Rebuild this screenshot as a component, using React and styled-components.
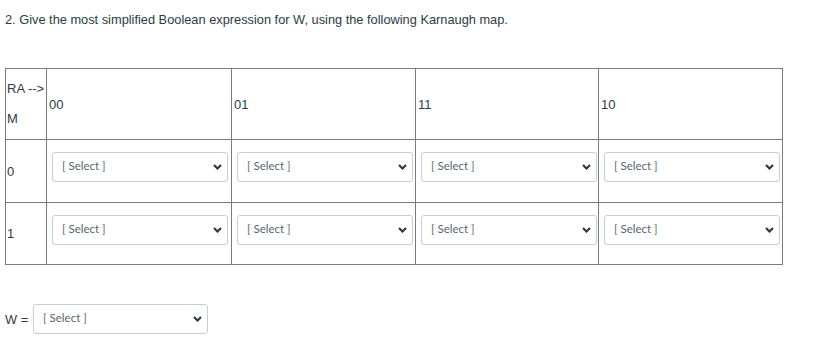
import React from "react";
import styled, { createGlobalStyle } from "styled-components";

const Global = createGlobalStyle`
  html, body { margin: 0; padding: 0; background: #fff; }
  body { font-family: "Liberation Sans", Arial, sans-serif; color: #2d3b45; }
`;

const Page = styled.div`
  padding: 12px 0 0 5px;
`;

const Title = styled.div`
  font-size: 12.8px;
  line-height: 16px;
  color: #2d3b45;
  margin-bottom: 40px;
`;

const Table = styled.table`
  border-collapse: collapse;
  table-layout: fixed;
  width: 777px;
  font-size: 13px;
`;

const Cell = styled.td`
  border: 1px solid #7a7a7a;
  padding: ${(p) => (p.$select ? "0 0 8px 5px" : "0 0 0 2px")};
  vertical-align: middle;
  text-align: left;
  height: ${(p) => p.$h}px;
  box-sizing: border-box;
`;

const LabelCell = styled(Cell)`
  padding-left: 1px;
  white-space: nowrap;
`;

const HeadLine = styled.div`
  line-height: 30px;
`;

const SelectWrap = styled.div`
  position: relative;
  width: ${(p) => p.$w || 176}px;
  height: 30px;
`;

const Select = styled.select`
  appearance: none;
  -webkit-appearance: none;
  width: 100%;
  height: 30px;
  box-sizing: border-box;
  border: 1px solid #c7cdd1;
  border-radius: 3px;
  background: #fff;
  padding: 0 24px 3px 9px;
  font-family: Lato, "Liberation Sans", sans-serif;
  font-size: 11.5px;
  color: #5a6670;
  outline: none;
`;

const Chevron = styled.svg`
  position: absolute;
  right: 6px;
  top: 12px;
  width: 9px;
  height: 6px;
  pointer-events: none;
`;

const Bottom = styled.div`
  display: flex;
  align-items: center;
  gap: 5px;
  margin-top: 39px;
  font-size: 12.8px;
`;

function Dropdown({ w }) {
  return (
    <SelectWrap $w={w}>
      <Select defaultValue="">
        <option value="">[ Select ]</option>
      </Select>
      <Chevron viewBox="0 0 9 6">
        <polyline points="1,1 4.5,4.5 8,1" fill="none" stroke="#2d3b45" strokeWidth="2.2" />
      </Chevron>
    </SelectWrap>
  );
}

const cols = ["00", "01", "11", "10"];

export default function App() {
  return (
    <>
      <Global />
      <Page>
        <Title>2. Give the most simplified Boolean expression for W, using the following Karnaugh map.</Title>
        <Table>
          <colgroup>
            <col style={{ width: 41 }} />
            <col style={{ width: 185 }} />
            <col style={{ width: 184 }} />
            <col style={{ width: 183 }} />
            <col style={{ width: 184 }} />
          </colgroup>
          <tbody>
            <tr>
              <LabelCell $h={71}>
                <HeadLine>RA --&gt;</HeadLine>
                <HeadLine>M</HeadLine>
              </LabelCell>
              {cols.map((c) => (
                <Cell key={c} $h={71}>{c}</Cell>
              ))}
            </tr>
            {["0", "1"].map((r, i) => (
              <tr key={r}>
                <LabelCell $h={i === 0 ? 63 : 62}>{r}</LabelCell>
                {cols.map((c) => (
                  <Cell key={c} $select $h={i === 0 ? 63 : 62}>
                    <Dropdown />
                  </Cell>
                ))}
              </tr>
            ))}
          </tbody>
        </Table>
        <Bottom>
          <span>W =</span>
          <Dropdown w={175} />
        </Bottom>
      </Page>
    </>
  );
}
